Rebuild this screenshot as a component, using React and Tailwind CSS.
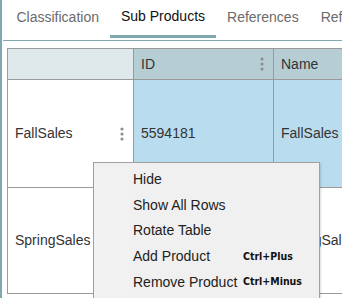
const tabs = ["Classification", "Sub Products", "References", "Ref"];

const menuItems = [
  { label: "Hide" },
  { label: "Show All Rows" },
  { label: "Rotate Table" },
  { label: "Add Product", key: "Ctrl+Plus" },
  { label: "Remove Product", key: "Ctrl+Minus" },
];

function Dots({ className = "" }) {
  return (
    <svg width="4" height="14" viewBox="0 0 4 14" className={className}>
      <circle cx="2" cy="2" r="1.6" fill="#8f8f8f" />
      <circle cx="2" cy="7" r="1.6" fill="#8f8f8f" />
      <circle cx="2" cy="12" r="1.6" fill="#8f8f8f" />
    </svg>
  );
}

export default function App() {
  return (
    <div
      className="relative h-[298px] w-[342px] overflow-hidden bg-white text-[14px] text-[#333]"
      style={{ fontFamily: '"Liberation Sans", Arial, sans-serif' }}
    >
      <div className="flex h-full border-l-2 border-[#7fa8b1]">
        <div className="flex w-full flex-col">
          {/* tabs */}
          <div className="flex h-[38px] items-stretch pl-[3.5px] text-[14px]">
            {tabs.map((tab, i) => (
              <div
                key={tab}
                className={`flex shrink-0 items-center px-[11px] pb-[3px] ${
                  i === 1 ? "border-b-[3px] border-[#7fa8b1] pb-0 text-[#111]" : "text-[#6b6b6b]"
                }`}
              >
                {tab}
              </div>
            ))}
          </div>
          <div className="ml-[1px] mt-[2px] h-px bg-[#7fa8b1]" />

          {/* table */}
          <div className="ml-[5px] mt-[7px] flex-1">
            <div className="grid w-[420px] grid-cols-[126px_140px_154px] border-l border-t border-[#9a9a9a]">
              <div className="h-[31px] border-b border-r border-[#9a9a9a] bg-[#dfe8eb]" />
              <div className="flex h-[31px] items-center justify-between border-b border-r border-[#9a9a9a] bg-[#b5cdd3] pl-[7px] pr-[9px]">
                <span>ID</span>
                <Dots />
              </div>
              <div className="flex h-[31px] items-center border-b border-r border-[#9a9a9a] bg-[#b5cdd3] pl-[7px]">
                Name
              </div>

              <div className="flex h-[108px] items-center justify-between border-b border-r border-[#9a9a9a] pl-[7px] pr-[9px]">
                <span>FallSales</span>
                <Dots />
              </div>
              <div className="flex h-[108px] items-center border-b border-r border-[#9a9a9a] bg-[#b9ddef] pl-[7px]">
                5594181
              </div>
              <div className="flex h-[108px] items-center border-b border-r border-[#9a9a9a] bg-[#b9ddef] pl-[7px]">
                FallSales
              </div>

              <div className="flex h-[106px] items-center border-b border-r border-[#9a9a9a] pl-[7px]">
                SpringSales
              </div>
              <div className="flex h-[106px] items-center border-b border-r border-[#9a9a9a] pl-[7px]">
                5594182
              </div>
              <div className="flex h-[106px] items-center border-b border-r border-[#9a9a9a] pl-[7px]">
                SpringSales
              </div>
            </div>
          </div>
        </div>
      </div>

      {/* context menu */}
      <div className="absolute left-[93px] top-[162px] flex w-[227px] border border-[#a0a0a0] bg-[#f0f0f0] py-[4px] shadow-[1px_1px_2px_rgba(0,0,0,0.15)]">
        <div className="w-[35px] shrink-0 bg-[#f2f2f2]" />
        <div className="flex flex-1 flex-col">
          {menuItems.map((item) => (
            <div key={item.label} className="flex h-[25.6px] items-center pl-[4px] text-[#222]">
              <span className="w-[110px] shrink-0">{item.label}</span>
              {item.key && (
                <span
                  className="text-[10.5px] font-bold text-[#111]"
                  style={{ fontFamily: '"DejaVu Sans Condensed", "Liberation Sans", sans-serif' }}
                >
                  {item.key}
                </span>
              )}
            </div>
          ))}
        </div>
      </div>
    </div>
  );
}
